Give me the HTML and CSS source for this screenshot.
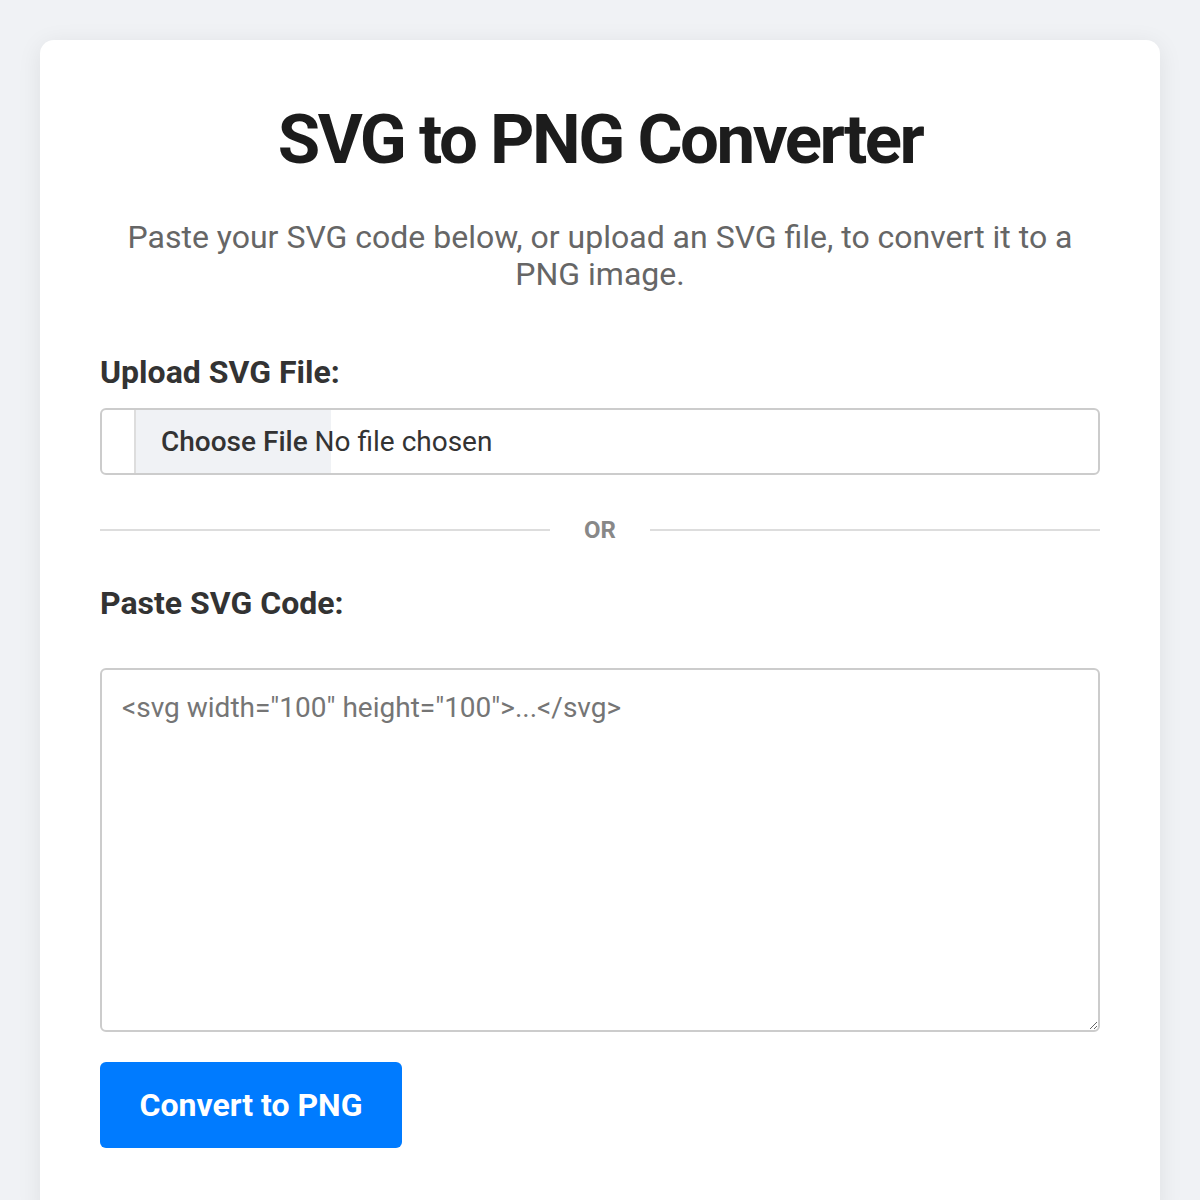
FILE: index.html
```html
<!DOCTYPE html>
<html lang="en">
<head>
<meta charset="utf-8">
<title>SVG to PNG Converter</title>
<link rel="stylesheet" href="styles.css">
</head>
<body>
<main class="card">
  <h1 class="title">SVG to PNG Converter</h1>
  <p class="subtitle">Paste your SVG code below, or upload an SVG file, to convert it to a PNG image.</p>
  <label class="label">Upload SVG File:</label>
  <div class="file-input">
    <span class="file-spacer"></span>
    <span class="file-text"><span class="file-btn">Choose File</span> No file chosen</span>
  </div>
  <div class="divider"><span class="line"></span><span class="or">OR</span><span class="line"></span></div>
  <label class="label label-code">Paste SVG Code:</label>
  <div class="textarea-wrap">
    <textarea class="code" placeholder="&lt;svg width=&quot;100&quot; height=&quot;100&quot;&gt;...&lt;/svg&gt;"></textarea>
  </div>
  <button class="convert">Convert to PNG</button>
</main>
</body>
</html>
```
FILE: styles.css
```css
html, body {
  margin: 0;
  padding: 0;
}
body {
  background: #f0f2f5;
  font-family: Roboto, "Liberation Sans", Arial, sans-serif;
  padding: 40px 40px 0;
  height: 1200px;
  box-sizing: border-box;
  overflow: hidden;
}
.card {
  background: #fff;
  border-radius: 14px;
  box-shadow: 0 4px 24px rgba(0, 0, 0, 0.08);
  padding: 60px 60px 60px;
  display: flex;
  flex-direction: column;
  height: 1180px;
  box-sizing: border-box;
}
.title {
  margin: 0;
  text-align: center;
  font-size: 69px;
  font-weight: 700;
  letter-spacing: -2.5px;
  color: #1c1c1c;
  line-height: 80px;
}
.subtitle {
  margin: 39px 0 0;
  text-align: center;
  font-size: 32px;
  line-height: 37px;
  color: #666;
  padding: 0 20px;
}
.label {
  display: block;
  font-size: 32px;
  font-weight: 700;
  color: #333;
  margin-top: 60px;
  line-height: 38px;
}
.label-code {
  margin-top: 39px;
}
.file-input {
  margin-top: 17px;
  height: 67px;
  border: 2px solid #ccc;
  border-radius: 6px;
  box-sizing: border-box;
  display: flex;
  align-items: stretch;
  overflow: hidden;
}
.file-spacer {
  width: 32px;
  border-right: 2px solid #ddd;
  flex: none;
}
.file-text {
  display: flex;
  align-items: center;
  padding-left: 25px;
  font-size: 28px;
  color: #333;
  white-space: pre;
  background: linear-gradient(to right, #f0f2f5 195px, transparent 195px);
  flex: 1;
}
.file-btn {
  font-weight: 500;
}
.divider {
  display: flex;
  align-items: center;
  margin-top: 40px;
  height: 30px;
}
.line {
  flex: 1;
  height: 2px;
  background: #ddd;
}
.or {
  width: 100px;
  text-align: center;
  font-size: 24px;
  font-weight: 700;
  color: #888;
}
.textarea-wrap {
  margin-top: 46px;
  display: flex;
}
.code {
  flex: 1;
  height: 364px;
  box-sizing: border-box;
  border: 2px solid #ccc;
  border-radius: 6px;
  padding: 21px 20px 20px;
  font-family: Roboto, "Liberation Sans", Arial, sans-serif;
  font-size: 28px;
  line-height: 34px;
  color: #333;
  resize: vertical;
  margin: 0;
}
.code::placeholder {
  color: #757575;
}
.convert {
  align-self: flex-start;
  margin-top: 30px;
  width: 302px;
  height: 86px;
  background: #007bff;
  color: #fff;
  border: none;
  border-radius: 6px;
  font-family: Roboto, "Liberation Sans", Arial, sans-serif;
  font-size: 32px;
  font-weight: 700;
}
```
